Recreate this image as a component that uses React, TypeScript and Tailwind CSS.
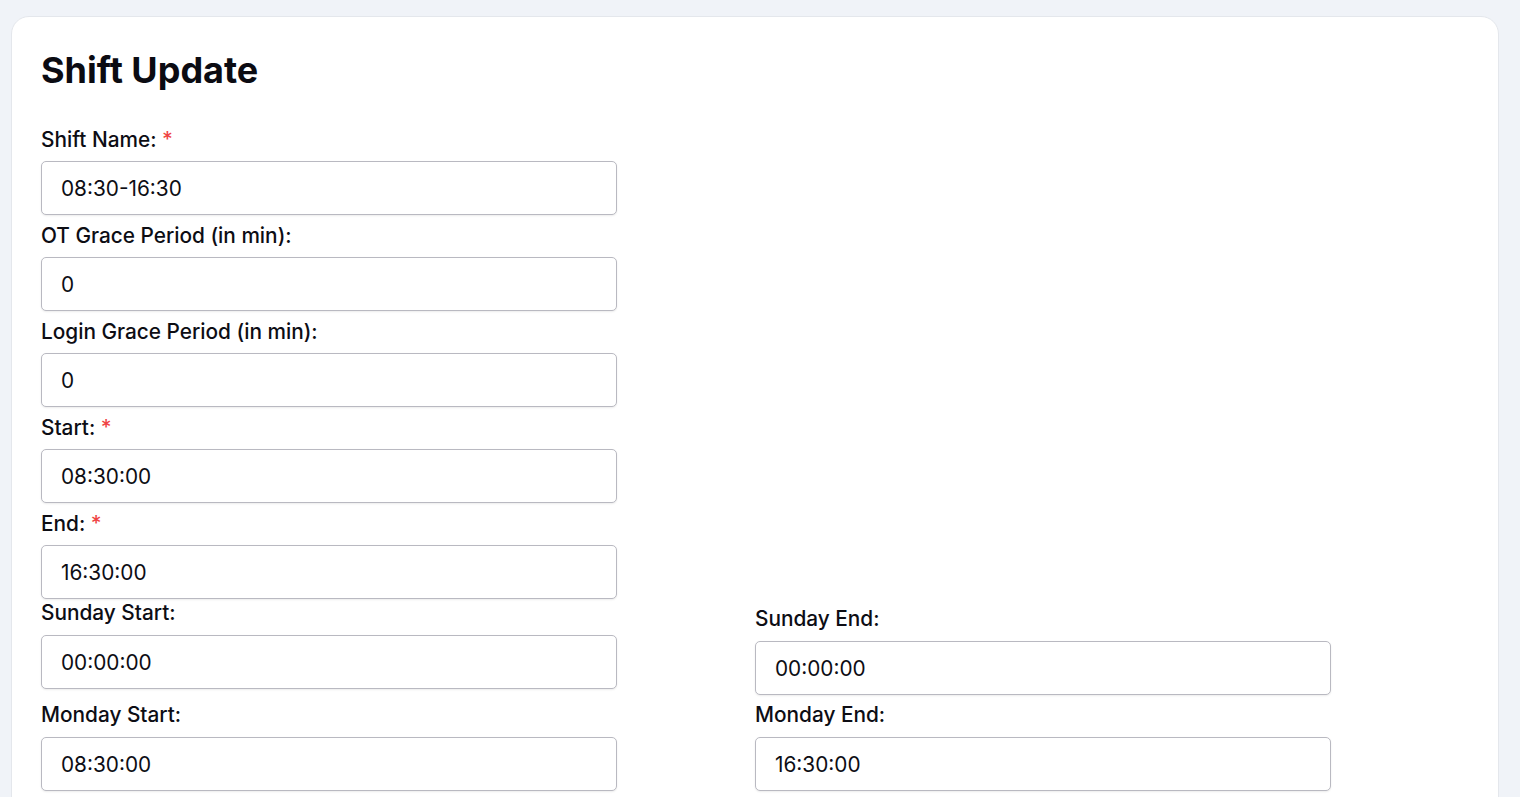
import React from "react";

function Label({ text, required }: { text: string; required?: boolean }) {
  return (
    <div className="text-[20.8px] font-medium leading-6 text-[#0d0d14]">
      {text}
      {required && <span className="text-[#ef4444]"> *</span>}
    </div>
  );
}

function Field({ value, gap }: { value: string; gap: string }) {
  return (
    <input
      readOnly
      value={value}
      className={
        gap +
        " block h-[54px] w-[576px] rounded-[5px] border border-[#b9b9c1] bg-white pl-[19px] text-[20.8px] text-[#0d0d14] shadow-[0_1px_2px_rgba(0,0,0,0.08)] outline-none"
      }
    />
  );
}

export default function App() {
  const top = [
    { label: "Shift Name:", value: "08:30-16:30", required: true },
    { label: "OT Grace Period (in min):", value: "0" },
    { label: "Login Grace Period (in min):", value: "0" },
    { label: "Start:", value: "08:30:00", required: true },
    { label: "End:", value: "16:30:00", required: true },
  ];
  return (
    <div
      className="min-h-screen bg-[#f0f3f8] pl-[11px] pr-[21px] pt-[16px]"
      style={{ fontFamily: "Inter, 'Noto Sans', sans-serif" }}
    >
      <div className="min-h-[800px] rounded-t-[18px] border border-[#e4e7ec] bg-white px-[29px] pt-[33px]">
        <h1 className="text-[36px] font-bold leading-[40px] text-[#0b0b12]">Shift Update</h1>
        <div className="mt-[38px]">
          {top.map((f, i) => (
            <div key={f.label} className={i === 0 ? "" : "mt-[9px]"}>
              <Label text={f.label} required={f.required} />
              <Field value={f.value} gap="mt-[9px]" />
            </div>
          ))}
        </div>
        <div className="grid grid-cols-2 items-start">
          <div className="mt-[2px]">
            <Label text="Sunday Start:" />
            <Field value="00:00:00" gap="mt-[10px]" />
          </div>
          <div className="mt-[8px]">
            <Label text="Sunday End:" />
            <Field value="00:00:00" gap="mt-[10px]" />
          </div>
          <div className="mt-[8px]">
            <Label text="Monday Start:" />
            <Field value="08:30:00" gap="mt-[10px]" />
          </div>
          <div className="mt-[8px]">
            <Label text="Monday End:" />
            <Field value="16:30:00" gap="mt-[10px]" />
          </div>
        </div>
      </div>
    </div>
  );
}
